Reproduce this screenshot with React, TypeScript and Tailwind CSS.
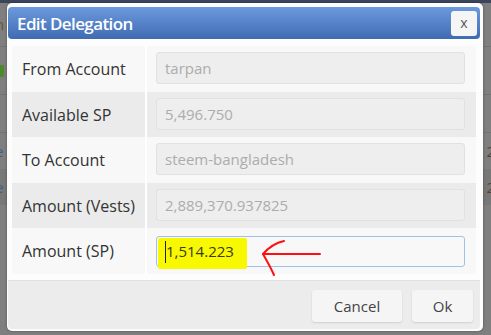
import React from 'react';

const rows = [
  { label: 'From Account', value: 'tarpan', shade: false, h: 'h-[46px]' },
  { label: 'Available SP', value: '5,496.750', shade: true, h: 'h-[45px]' },
  { label: 'To Account', value: 'steem-bangladesh', shade: false, h: 'h-[46px]' },
  { label: 'Amount (Vests)', value: '2,889,370.937825', shade: true, h: 'h-[45px]' },
];

function Backdrop() {
  // dimmed page that sits behind the modal
  return (
    <div className="w-full h-full flex flex-col bg-[#7f7f7f]">
      <div className="h-[3px] bg-[#3b465e]" />
      <div className="h-[44px] border-b border-[#737373] flex justify-between items-center px-[1px]">
        <span className="text-[#6b5332] text-[15px] -ml-[6px]">n</span>
      </div>
      <div className="h-[48px] border-b border-[#737373] flex items-center">
        <span className="block w-[4px] h-[12px] bg-[#4d8a2e]" />
      </div>
      <div className="h-[38px] border-b border-[#737373] flex items-center">
        <span className="text-[#3d5f8c] text-[15px] -ml-[3px]">.</span>
      </div>
      <div className="h-[36px] flex items-center justify-between">
        <span className="text-[#3d5f8c] text-[15px] -ml-[5px]">e</span>
        <span className="text-[#5a4030] text-[15px] mr-[-4px]">2</span>
      </div>
      <div className="h-[36px] bg-[#787878] flex items-center justify-between">
        <span className="text-[#3d5f8c] text-[15px] -ml-[5px]">e</span>
        <span className="text-[#5a4030] text-[15px] mr-[-4px]">2</span>
      </div>
      <div className="flex-1" />
    </div>
  );
}

export default function App() {
  return (
    <div className="relative w-[491px] h-[335px] overflow-hidden" style={{ fontFamily: '"Open Sans", "Noto Sans", sans-serif' }}>
      <Backdrop />

      {/* Modal */}
      <div className="absolute left-[7px] top-[3px] w-[476px] h-[328px] bg-[#fdfdfd] rounded-[5px] shadow-[0_0_3px_rgba(0,0,0,0.35)] pt-[4px] pl-[1px] pr-[3px] flex flex-col">
        {/* Title bar */}
        <div className="h-[32px] rounded-[4px] bg-gradient-to-b from-[#6d9ade] to-[#3f6bb2] flex items-center justify-between pl-[9px] pr-[3px] shrink-0">
          <h2 className="text-white text-[17px] font-semibold leading-none tracking-[-0.6px]">Edit Delegation</h2>
          <button className="w-[26px] h-[25px] rounded-[3px] bg-[#f5f5f5] text-[#555] text-[14px] leading-none flex items-center justify-center">
            x
          </button>
        </div>

        {/* Body */}
        <div className="flex-1 pt-[7px] pl-[4px] pr-[4px]">
          <div className="flex flex-col">
            {rows.map((r) => (
              <div key={r.label} className={`grid grid-cols-[133px_2px_1fr] ${r.h} ${r.shade ? 'bg-[#ebebeb]' : 'bg-[#f8f8f8]'}`}>
                <div className="pl-[10px] flex items-center text-[16px] text-[#333]">{r.label}</div>
                <div className="bg-white" />
                <div className="pr-[11px] pt-[6px]">
                  <div className="ml-[9px] h-[32px] rounded-[3px] border border-[#e1e1e1] bg-[#eeeeee] flex items-center pl-[8px] text-[15px] text-[#acacac]">
                    {r.value}
                  </div>
                </div>
              </div>
            ))}
            <div className="grid grid-cols-[133px_2px_1fr] h-[46px] bg-[#f8f8f8]">
              <div className="pl-[10px] flex items-center text-[16px] text-[#333]">Amount (SP)</div>
              <div className="bg-white" />
              <div className="pr-[11px] pt-[8px]">
                <div className="ml-[9px] relative h-[31px] rounded-[3px] border border-[#a3c0e6] bg-[#f8f8f8] flex items-center pl-[9px] text-[15px] text-[#333]">
                  {/* highlighter mark */}
                  <span className="absolute left-[1px] top-[1px] w-[89px] h-[31px] bg-[#f8f800] rounded-[2px]" />
                  <span className="absolute left-[8px] top-[4px] w-[1px] h-[22px] bg-[#222]" />
                  <span className="relative text-[#3a3a1a]">1,514.223</span>
                  {/* red arrow */}
                  <svg className="absolute left-[104px] top-[2px]" width="62" height="38" viewBox="0 0 62 38">
                    <path d="M2 15 L59 15" stroke="#ff1010" strokeWidth="2" fill="none" strokeLinecap="round" />
                    <path d="M2 15 C 8 8, 14 4, 23 2" stroke="#ff1010" strokeWidth="2" fill="none" strokeLinecap="round" />
                    <path d="M2 15 C 6 22, 10 29, 13 36" stroke="#ff1010" strokeWidth="2" fill="none" strokeLinecap="round" />
                  </svg>
                </div>
              </div>
            </div>
          </div>
        </div>

        {/* Footer */}
        <div className="h-[49px] border-t border-[#e0e0e0] bg-[#ececec] rounded-b-[4px] mb-[2px] flex items-start justify-end gap-[10px] pt-[9px] pr-[7px] shrink-0">
          <button className="w-[90px] h-[32px] rounded-[3px] bg-[#f5f5f5] shadow-[0_1px_2px_rgba(0,0,0,0.12)] text-[15px] text-[#444]">
            Cancel
          </button>
          <button className="w-[61px] h-[32px] rounded-[3px] bg-[#f5f5f5] shadow-[0_1px_2px_rgba(0,0,0,0.12)] text-[15px] text-[#444]">
            Ok
          </button>
        </div>
      </div>
    </div>
  );
}
